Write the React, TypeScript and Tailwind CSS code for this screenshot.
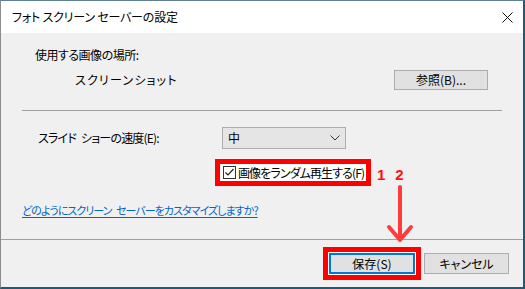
import React from 'react';

const jp = "font-['Segoe_UI','Noto_Sans_CJK_JP',sans-serif] [font-feature-settings:'palt']";

function CloseIcon() {
  return (
    <svg width="11" height="11" viewBox="0 0 11 11" className="block">
      <path d="M0.5 0.5 L10.5 10.5 M10.5 0.5 L0.5 10.5" stroke="#111" strokeWidth="1" fill="none" />
    </svg>
  );
}

function Chevron() {
  return (
    <svg width="10" height="6" viewBox="0 0 10 6" className="block">
      <path d="M0.5 0.5 L5 5 L9.5 0.5" stroke="#333" strokeWidth="1" fill="none" />
    </svg>
  );
}

function CheckBox() {
  return (
    <div className="shrink-0 w-[13px] h-[13px] border border-[#333] bg-white flex items-center justify-center">
      <svg width="11" height="11" viewBox="0 0 11 11" className="block">
        <path d="M1.5 5.5 L4 8 L9.5 2" stroke="#222" strokeWidth="1.2" fill="none" />
      </svg>
    </div>
  );
}

function RedArrow() {
  return (
    <svg width="30" height="60" viewBox="0 0 30 60" className="block">
      <path d="M15 2 L15 53" stroke="#ff3b3b" strokeWidth="4" strokeLinecap="round" />
      <path d="M4 42 L15 55 L26 42" stroke="#ff3b3b" strokeWidth="4" strokeLinecap="round" strokeLinejoin="round" fill="none" />
    </svg>
  );
}

export default function App() {
  return (
    <div className={`relative w-[525px] h-[289px] flex flex-col bg-[#f0f0f0] border-t border-t-[#5d8193] border-l border-l-[#8c8c8c] border-r-2 border-r-[#1d5b78] border-b-2 border-b-[#1d5b78] text-[12px] leading-[16px] text-black whitespace-nowrap ${jp}`}>
      {/* title bar */}
      <div className="h-[32px] bg-white flex items-center justify-between pl-[11px] pr-[10px]">
        <span className="tracking-[-0.2px]">フォト スクリーン セーバーの設定</span>
        <CloseIcon />
      </div>

      {/* body */}
      <div className="h-[206px] flex flex-col">
        <div className="pt-[14px] pl-[34px] tracking-[-0.5px]">使用する画像の場所:</div>
        <div className="mt-[7px] h-[20px] flex items-center justify-between pl-[74px] pr-[35px]">
          <span className="tracking-[1.2px]">スクリーンショット</span>
          <button className="w-[94px] h-[20px] bg-[#e1e1e1] border border-[#adadad] flex items-center justify-center">
            参照(B)...
          </button>
        </div>
        <div className="mt-[20px] mx-[21px] h-px bg-[#a0a0a0]" />
        <div className="mt-[16px] h-[22px] flex items-center pl-[37px]">
          <span className="w-[184px] tracking-[-0.8px] [word-spacing:3px]">スライド ショーの速度(E):</span>
          <div className="w-[124px] h-[22px] bg-[#e5e5e5] border border-[#adadad] flex items-center justify-between pl-[5px] pr-[5px]">
            <span>中</span>
            <Chevron />
          </div>
        </div>
        <div className="mt-[10px] pl-[214px]">
          <div className="w-[156px] h-[27px] border-[5px] border-[#ff0000] bg-white flex items-center pl-[3px] gap-[2px]">
            <CheckBox />
            <span className="tracking-[-0.9px]">画像をランダム再生する(F)</span>
          </div>
        </div>
        <div className="mt-[16px] pl-[21px]">
          <span className="text-[11px] text-[#0066cc] underline underline-offset-2 tracking-[-0.95px] [word-spacing:3px]">
            どのようにスクリーン セーバーをカスタマイズしますか?
          </span>
        </div>
      </div>

      {/* footer */}
      <div className="flex-1 border-t border-t-[#a0a0a0] flex items-center justify-end gap-[3px] pr-[14px]">
        <div className="border-[5px] border-[#ff0000] bg-white p-px">
          <button className="w-[86px] h-[21px] bg-[#e1e1e1] border-2 border-[#0078d7] flex items-center justify-center">
            保存(S)
          </button>
        </div>
        <button className="w-[85px] h-[21px] bg-[#e1e1e1] border border-[#adadad] flex items-center justify-center">
          キャンセル
        </button>
      </div>

      {/* annotations */}
      <div className="absolute left-[376px] top-[165px] flex gap-[10px] font-['Liberation_Sans',sans-serif] font-bold text-[15px] leading-[18px] text-[#ff1010]">
        <span>1</span>
        <span>2</span>
      </div>
      <div className="absolute left-[384px] top-[184px]">
        <RedArrow />
      </div>
    </div>
  );
}
